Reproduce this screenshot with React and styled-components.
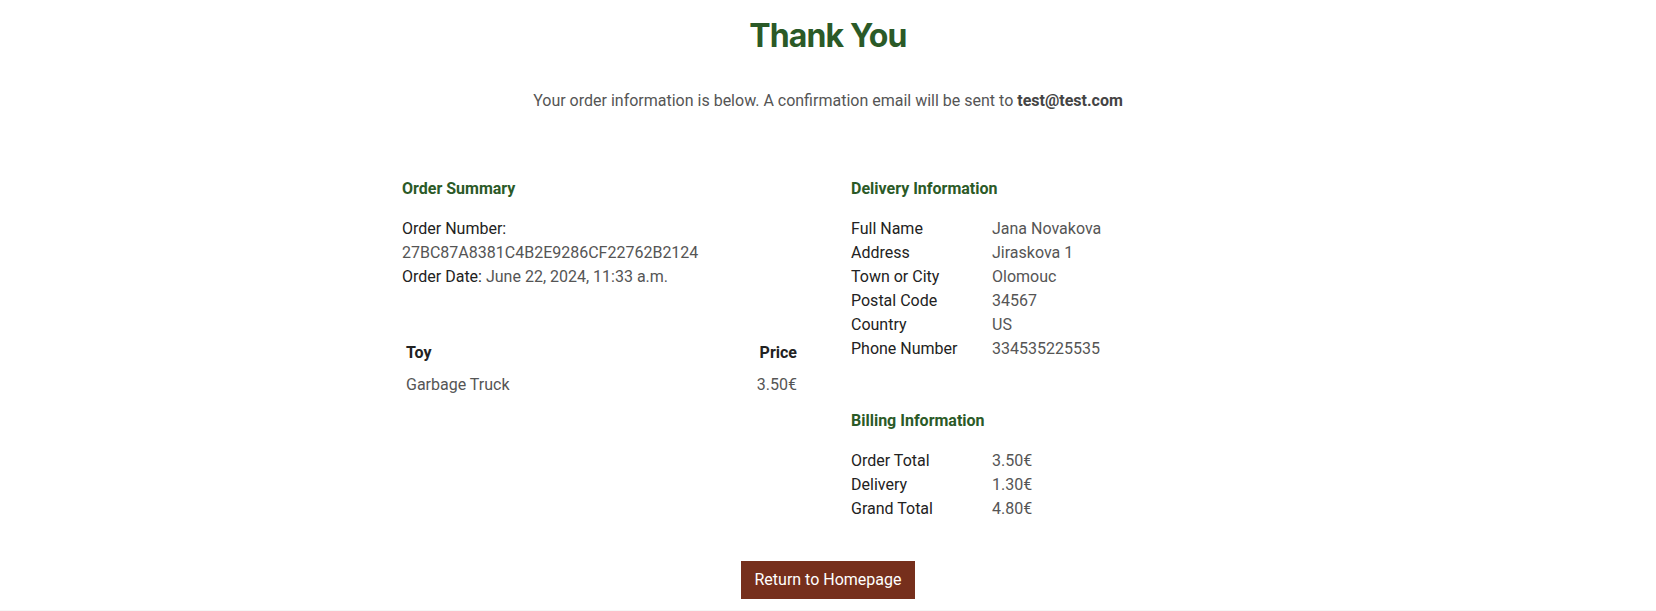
import React from "react";
import styled, { createGlobalStyle } from "styled-components";

const GlobalStyle = createGlobalStyle`
  html, body { margin: 0; padding: 0; background: #ffffff; }
  body {
    font-family: Roboto, "Noto Sans", Arial, sans-serif;
    font-size: 16px;
    line-height: 1.5;
    color: #222222;
  }
  * { box-sizing: border-box; }
`;

const Page = styled.main`
  padding-top: 16px;
  min-height: 611px;
  border-bottom: 1px solid #f6f6f6;
`;

const Title = styled.h1`
  margin: 0;
  text-align: center;
  font-family: Inter, Roboto, Arial, sans-serif;
  font-weight: 700;
  font-size: 32px;
  line-height: 39.6px;
  letter-spacing: -0.9px;
  color: #2b5a27;
`;

const Lead = styled.p`
  margin: 33px 0 0;
  text-align: center;
  color: #555555;
  strong { color: #444444; font-weight: 700; }
`;

const Columns = styled.div`
  display: grid;
  grid-template-columns: 399px 403px;
  column-gap: 50px;
  justify-content: center;
  margin-top: 64px;
`;

const Column = styled.section`
  display: flex;
  flex-direction: column;
`;

const SectionTitle = styled.h3`
  margin: ${(p) => (p.$spaced ? "48px" : "0")} 0 16px;
  font-size: 16px;
  font-weight: 700;
  line-height: 1.5;
  color: #2b5a27;
`;

const Line = styled.div`
  color: #222222;
`;

const Value = styled.span`
  color: #555555;
`;

const ValueBlock = styled.div`
  color: #555555;
`;

const Table = styled.table`
  width: 100%;
  margin-top: 48px;
  border-collapse: collapse;
`;

const Th = styled.th`
  padding: 4px;
  font-weight: 700;
  color: #222222;
  text-align: ${(p) => (p.$right ? "right" : "left")};
`;

const Td = styled.td`
  padding: 4px;
  color: #555555;
  text-align: ${(p) => (p.$right ? "right" : "left")};
`;

const InfoGrid = styled.div`
  display: grid;
  grid-template-columns: 141px 1fr;
`;

const Label = styled.div`
  color: #222222;
`;

const Footer = styled.div`
  display: flex;
  justify-content: center;
  margin-top: 40px;
`;

const Button = styled.a`
  display: inline-block;
  padding: 6px 12px;
  border: 1px solid #762f1c;
  background: #762f1c;
  color: #ffffff;
  font-size: 16px;
  line-height: 1.5;
  text-decoration: none;
  cursor: pointer;
`;

const delivery = [
  ["Full Name", "Jana Novakova"],
  ["Address", "Jiraskova 1"],
  ["Town or City", "Olomouc"],
  ["Postal Code", "34567"],
  ["Country", "US"],
  ["Phone Number", "334535225535"],
];

const billing = [
  ["Order Total", "3.50€"],
  ["Delivery", "1.30€"],
  ["Grand Total", "4.80€"],
];

function InfoList({ rows }) {
  return (
    <InfoGrid>
      {rows.map(([k, v]) => (
        <React.Fragment key={k}>
          <Label>{k}</Label>
          <ValueBlock>{v}</ValueBlock>
        </React.Fragment>
      ))}
    </InfoGrid>
  );
}

export default function App() {
  return (
    <>
      <GlobalStyle />
      <Page>
        <Title>Thank You</Title>
        <Lead>
          Your order information is below. A confirmation email will be sent to{" "}
          <strong>test@test.com</strong>
        </Lead>
        <Columns>
          <Column>
            <SectionTitle>Order Summary</SectionTitle>
            <Line>Order Number:</Line>
            <ValueBlock>27BC87A8381C4B2E9286CF22762B2124</ValueBlock>
            <Line>
              Order Date: <Value>June 22, 2024, 11:33 a.m.</Value>
            </Line>
            <Table>
              <thead>
                <tr>
                  <Th>Toy</Th>
                  <Th $right>Price</Th>
                </tr>
              </thead>
              <tbody>
                <tr>
                  <Td>Garbage Truck</Td>
                  <Td $right>3.50€</Td>
                </tr>
              </tbody>
            </Table>
          </Column>
          <Column>
            <SectionTitle>Delivery Information</SectionTitle>
            <InfoList rows={delivery} />
            <SectionTitle $spaced>Billing Information</SectionTitle>
            <InfoList rows={billing} />
          </Column>
        </Columns>
        <Footer>
          <Button>Return to Homepage</Button>
        </Footer>
      </Page>
    </>
  );
}
